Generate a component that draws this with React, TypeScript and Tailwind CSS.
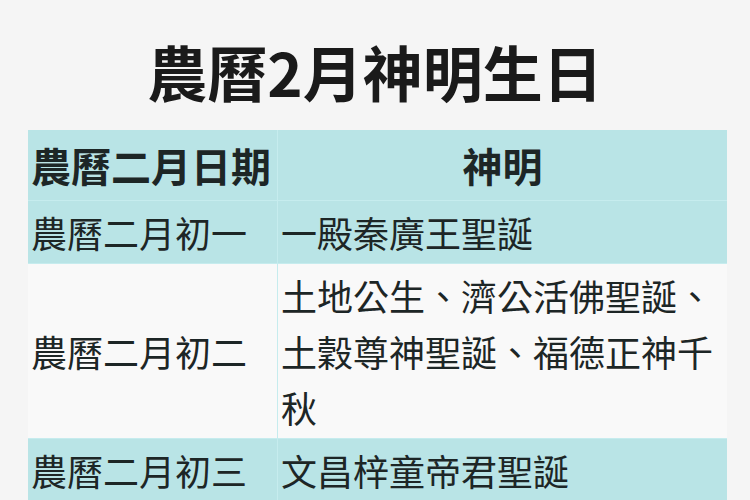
const rows: { date: string; gods: string; bg: string }[] = [
  { date: "農曆二月初一", gods: "一殿秦廣王聖誕", bg: "bg-[#b9e4e6]" },
  {
    date: "農曆二月初二",
    gods: "土地公生、濟公活佛聖誕、土穀尊神聖誕、福德正神千秋",
    bg: "bg-[#f9f9f9]",
  },
  { date: "農曆二月初三", gods: "文昌梓童帝君聖誕", bg: "bg-[#b9e4e6]" },
];

export default function App() {
  return (
    <div
      className="w-[750px] h-[500px] overflow-hidden bg-[#f5f5f5] text-[#1d2626]"
      style={{ fontFamily: '"Noto Sans CJK TC", "Noto Sans", sans-serif' }}
    >
      <div className="h-[130px] flex items-center justify-center pt-[12px]">
        <h1 className="text-[60px] font-bold leading-none text-[#1a1a1a]">農曆2月神明生日</h1>
      </div>

      <div className="mx-[28px] w-[699px]">
        <div className="grid grid-cols-[249px_450px] bg-[#b9e4e6] border-b border-[#c6ecee]">
          <div className="h-[70px] flex items-center pl-[3px] text-[40px] font-bold leading-[56px]">
            農曆二月日期
          </div>
          <div className="h-[70px] flex items-center justify-center border-l border-[#c6ecee] text-[40px] font-bold leading-[56px]">
            神明
          </div>
        </div>

        {rows.map((r) => (
          <div key={r.date} className={`grid grid-cols-[249px_450px] ${r.bg} border-b border-[#c6ecee]`}>
            <div className="flex items-center pl-[3px] py-[3px] text-[36px] leading-[56px]">{r.date}</div>
            <div className="flex items-center border-l border-[#c6ecee] pl-[3px] pr-[10px] py-[3px] text-[36px] leading-[56px]">
              {r.gods}
            </div>
          </div>
        ))}
      </div>
    </div>
  );
}
